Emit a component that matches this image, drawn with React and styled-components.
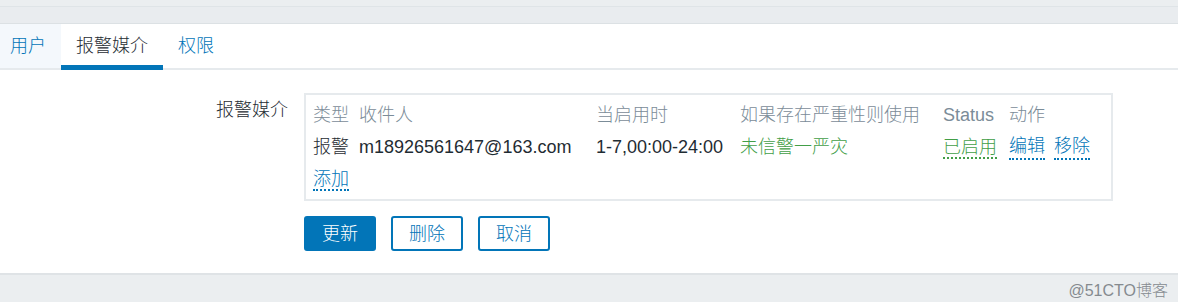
import React from "react";
import styled, { createGlobalStyle } from "styled-components";

const GlobalStyle = createGlobalStyle`
    body {
        margin: 0;
        background: #ebeef0;
        font-family: "Liberation Sans", Arial, "Noto Sans CJK SC", sans-serif;
        font-weight: 300;
        color: #1f2c33;
    }
`

const App = () => {
    return (
        <Page>
            <GlobalStyle />
            <TopStrip />
            <TopBar />
            <Main>
                <TabList>
                    <Tab hovered>用户</Tab>
                    <Tab active>报警媒介</Tab>
                    <Tab>权限</Tab>
                </TabList>
                <Form>
                    <FormRow>
                        <Label>报警媒介</Label>
                        <MediaBox>
                            <Head>类型</Head>
                            <Head>收件人</Head>
                            <Head>当启用时</Head>
                            <Head>如果存在严重性则使用</Head>
                            <Head>Status</Head>
                            <Head>动作</Head>

                            <Cell>报警</Cell>
                            <Cell>m18926561647@163.com</Cell>
                            <Cell>1-7,00:00-24:00</Cell>
                            <Cell green>未信警一严灾</Cell>
                            <Cell><Link green>已启用</Link></Cell>
                            <Cell>
                                <Actions>
                                    <Link>编辑</Link>
                                    <Link>移除</Link>
                                </Actions>
                            </Cell>

                            <Cell><Link>添加</Link></Cell>
                        </MediaBox>
                    </FormRow>
                    <Buttons>
                        <Button primary>更新</Button>
                        <Button>删除</Button>
                        <Button>取消</Button>
                    </Buttons>
                </Form>
            </Main>
            <Footer>
                <Watermark>@51CTO博客</Watermark>
            </Footer>
        </Page>
    );
};

const Page = styled.div`
    width: 1178px;
    height: 302px;
    display: flex;
    flex-direction: column;
    overflow: hidden;
`
const TopStrip = styled.div`
    height: 6px;
    background: #ebeef0;
    border-bottom: 1px solid #dfe4e7;
`
const TopBar = styled.div`
    height: 16px;
    background: #e9ecef;
    border-bottom: 1px solid #dce1e4;
`
const Main = styled.div`
    background: #fff;
    border-bottom: 2px solid #dfe3e6;
`
const TabList = styled.div`
    display: flex;
    margin-left: -5px;
    border-bottom: 2px solid #e6eaed;
`
const Tab = styled.div`
    position: relative;
    height: 44px;
    display: flex;
    align-items: center;
    padding: 0 15px;
    font-size: 18px;
    line-height: 24px;
    color: ${p => (p.active ? "#1f2c33" : "#0275b8")};
    background: ${p => (p.hovered ? "#f4f8fc" : "transparent")};

    &::after {
        content: "";
        display: ${p => (p.active ? "block" : "none")};
        position: absolute;
        left: 0;
        right: 0;
        bottom: -2px;
        height: 5px;
        background: #0275b8;
    }
`
const Form = styled.div`
    padding: 23px 0 22px;
`
const FormRow = styled.div`
    display: grid;
    grid-template-columns: 288px 809px;
    column-gap: 16px;
`
const Label = styled.div`
    text-align: right;
    padding-top: 5px;
    font-size: 18px;
    line-height: 24px;
    color: #1f2c33;
`
const MediaBox = styled.div`
    display: grid;
    grid-template-columns: 46px 237px 144px 203px 66px 1fr;
    grid-auto-rows: 32px;
    align-items: center;
    padding: 4px 0 4px 7px;
    border: 2px solid #e6eaed;
`
const Head = styled.div`
    font-size: 18px;
    line-height: 24px;
    color: #7b8c98;
    white-space: nowrap;
`
const Cell = styled.div`
    font-size: 18px;
    line-height: 24px;
    white-space: nowrap;
    color: ${p => (p.green ? "#429e47" : "#1f2c33")};
`
const Actions = styled.div`
    display: flex;
    gap: 9px;
`
const Link = styled.span`
    color: ${p => (p.green ? "#429e47" : "#0275b8")};
    border-bottom: 2px dotted ${p => (p.green ? "#429e47" : "#0275b8")};
    cursor: pointer;
`
const Buttons = styled.div`
    display: flex;
    gap: 15px;
    margin: 15px 0 0 304px;
`
const Button = styled.button`
    width: 72px;
    height: 35px;
    padding: 0;
    border-radius: 3px;
    border: 2px solid #0275b8;
    background: ${p => (p.primary ? "#0275b8" : "#fff")};
    color: ${p => (p.primary ? "#fff" : "#0275b8")};
    font-family: inherit;
    font-weight: inherit;
    font-size: 18px;
    line-height: 24px;
`
const Footer = styled.div`
    flex: 1;
    display: flex;
    justify-content: flex-end;
    align-items: center;
    padding-right: 10px;
    background: #ebeef0;
`
const Watermark = styled.span`
    font-size: 16px;
    color: #858a8f;
`

export default App;
